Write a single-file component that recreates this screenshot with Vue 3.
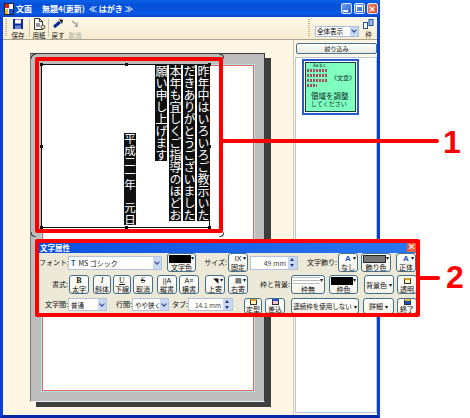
<script setup>
const columns = [
  { text: '昨年中はいろいろご教示いた', cls: '' },
  { text: 'だきありがとうございました', cls: '' },
  { text: '本年も宜しくご指導のほどお', cls: '' },
  { text: '願い申し上げます', cls: '' },
  { text: '平成二一年　元日', cls: 'date' }
]
const handles = ['tl', 'tc', 'tr', 'ml', 'mr', 'bl', 'bc', 'br']
const corners = ['c-tl', 'c-tr', 'c-bl', 'c-br']
</script>

<template>
  <div class="stage">
    <div class="window">
      <header class="titlebar">
        <svg class="app-icon" width="10" height="12" viewBox="0 0 10 12">
          <rect x="0.5" y="0.5" width="9" height="11" fill="#fff" stroke="#222" />
          <rect x="1" y="1" width="4" height="4" fill="#e02020" />
          <rect x="5" y="6" width="4" height="5" fill="#2050d0" />
          <rect x="1" y="6" width="3" height="5" fill="#f0c020" />
        </svg>
        <span class="t1">文面</span>
        <span class="t2">無題4(更新)</span>
        <span class="t3">≪ はがき ≫</span>
        <div class="caps">
          <span class="cap"><i class="min"></i></span>
          <span class="cap"><i class="max"></i></span>
          <span class="cap close">✕</span>
        </div>
      </header>

      <div class="toolbar">
        <span class="grip"></span>
        <div class="tool tool-first">
          <svg width="12" height="12" viewBox="0 0 12 12">
            <rect x="1" y="1" width="10" height="10" fill="#0a2a9a" />
            <rect x="3" y="1.500" width="6" height="4" fill="#fff" />
            <rect x="3" y="7.500" width="6" height="3.500" fill="#6a86d0" />
          </svg>
          <span>保存</span>
        </div>
        <span class="sep"></span>
        <div class="tool">
          <svg width="14" height="12" viewBox="0 0 14 12">
            <path d="M2.500.5h5l3 3v8h-8z" fill="#fff" stroke="#333" />
            <path d="M7.500.5v3h3M4 6h4M4 8h4" fill="none" stroke="#333" />
            <circle cx="11" cy="9" r="2" fill="#e8e0b0" stroke="#555" />
          </svg>
          <span>用紙</span>
        </div>
        <span class="sep"></span>
        <div class="tool">
          <svg width="12" height="12" viewBox="0 0 12 12">
            <path d="M2 9 8 4" stroke="#0a2a9a" stroke-width="3" />
            <path d="M7 1l4 1-1 4z" fill="#111" />
          </svg>
          <span>戻す</span>
        </div>
        <div class="tool disabled">
          <svg width="12" height="12" viewBox="0 0 12 12">
            <path d="M3 3l5 4" stroke="#999" stroke-width="1.500" />
            <path d="M9 4v5H5z" fill="#aaa" />
          </svg>
          <span>取消</span>
        </div>
        <span class="toolbar-space"></span>
        <span class="grip"></span>
        <div class="view-select"><span>全体表示</span><b class="arrow"></b></div>
        <div class="tool frame-tool">
          <svg width="11" height="10" viewBox="0 0 11 10">
            <rect x="0.500" y="3.500" width="4" height="6" fill="#fff" stroke="#2050a0" />
            <rect x="6" y="0.500" width="4" height="6" fill="#9cc0ee" stroke="#2050a0" />
          </svg>
          <span>枠</span>
        </div>
      </div>

      <main class="body">
        <section class="canvas">
          <div class="page">
            <div class="paper"></div>
          </div>
        </section>
        <aside class="side">
          <div class="filter">絞り込み</div>
          <div class="list">
            <div class="thumb">
              <div class="thumb-inner">
                <div class="thumb-abc">Aa b c</div>
                <div class="thumb-mid">
                  <div class="thumb-dots"><i></i><i></i><i></i><i class="short"></i></div>
                  <span>《文章》</span>
                </div>
                <div class="thumb-note">領域を調整</div>
                <div class="thumb-sub">してください</div>
              </div>
            </div>
          </div>
        </aside>
      </main>
    </div>

    <div class="selection">
      <span v-for="h in handles" :key="h" class="handle" :class="h"></span>
      <div class="vtext">
        <div v-for="c in columns" :key="c.text" class="vcol" :class="c.cls">{{ c.text }}</div>
      </div>
    </div>

    <div class="panel">
      <div class="panel-title"><span>文字属性</span><b>×</b></div>
      <div class="row row1">
        <span class="lbl w29">フォント:</span>
        <div class="combo w94 ml0">
          <span class="combo-text"><em class="tt">T</em>MS ゴシック</span><b class="arrow"></b>
        </div>
        <div class="btn color w29 ml5"><i class="swatch black"></i><span>文字色</span><u>▾</u></div>
        <span class="lbl w31">サイズ:</span>
        <div class="btn w20 ml1"><span class="ico small">IX</span><span>固定</span><u>▾</u></div>
        <div class="spin w48 ml2"><span>49 mm</span><div class="updown"><b></b><b class="dn"></b></div></div>
        <span class="lbl w39">文字飾り:</span>
        <div class="btn w20 ml1"><span class="ico blue">A</span><span>なし</span><u>▾</u></div>
        <div class="btn color w30 ml3"><i class="swatch gray"></i><span>飾り色</span><u>▾</u></div>
        <div class="btn w20 ml5"><span class="ico blue">A</span><span>正体</span><u>▾</u></div>
      </div>
      <div class="row row2">
        <span class="lbl w29">書式:</span>
        <div class="btn w20 ml1"><span class="ico"><strong>B</strong></span><span>太字</span></div>
        <div class="btn w18 ml4"><span class="ico"><em>I</em></span><span>斜体</span></div>
        <div class="btn w18 ml2"><span class="ico"><ins>U</ins></span><span>下線</span></div>
        <div class="btn w20 ml2"><span class="ico"><del>S</del></span><span>取消</span></div>
        <div class="btn w20 ml4"><span class="ico small">||A</span><span>縦書</span></div>
        <div class="btn w20 ml2"><span class="ico small">A≡</span><span>横書</span></div>
        <div class="btn w20 ml6"><span class="ico small">◥</span><span>上寄</span><u>▾</u></div>
        <div class="btn w20 ml3"><span class="ico small">▤</span><span>右寄</span><u>▾</u></div>
        <span class="lbl w42">枠と背景:</span>
        <div class="btn w34 ml1"><i class="swatch dotted"></i><span>枠無</span><u>▾</u></div>
        <div class="btn color w29 ml4"><i class="swatch black"></i><span>枠色</span><u>▾</u></div>
        <div class="btn wide w30 ml6"><span>背景色</span><u>▾</u></div>
        <div class="btn w20 ml3"><i class="doc"></i><span>透明</span></div>
      </div>
      <div class="row row3">
        <span class="lbl w29">文字間:</span>
        <div class="combo sm w39 ml0"><span class="combo-text">普通</span><b class="arrow"></b></div>
        <span class="lbl w20 ml5">行間:</span>
        <div class="combo sm w37 ml0"><span class="combo-text">やや狭く</span><b class="arrow"></b></div>
        <span class="lbl w19">タブ:</span>
        <div class="spin sm w45"><span>14.1 mm</span><div class="updown"><b></b><b class="dn"></b></div></div>
        <div class="btn w18 ml11"><i class="doc"></i><span>定型</span></div>
        <div class="btn w20 ml3"><i class="doc pink"></i><span>差込</span></div>
        <div class="btn wide w68 ml6 tiny"><span>連続枠を使用しない</span><u>▾</u></div>
        <div class="btn wide w31 ml4"><span>詳細</span><u>▾</u></div>
        <div class="btn w20 ml3"><i class="doc exit"></i><span>終了</span></div>
      </div>
    </div>

    <div class="mark mark-one"></div>
    <div class="mark mark-two"></div>
    <span v-for="c in corners" :key="c" class="corner" :class="c"></span>
    <div class="leader leader-one"></div>
    <div class="leader leader-two"></div>
    <span class="callout callout-one">1</span>
    <span class="callout callout-two">2</span>
  </div>
</template>

<style>
html, body { margin: 0; background: #fff; }
</style>

<style scoped>
.stage {
  position: relative;
  width: 470px;
  height: 418px;
  overflow: hidden;
  background: #fff;
  font-family: "Noto Sans CJK JP", "Liberation Sans", sans-serif;
}
.window {
  width: 380px;
  height: 418px;
  box-sizing: border-box;
  display: flex;
  flex-direction: column;
  border-left: 3px solid #0a3fd8;
  border-right: 3px solid #0a3fd8;
  border-bottom: 3px solid #0626a8;
  background: #fff6e6;
}
.titlebar {
  margin: 0 -3px;
  height: 17px;
  flex: none;
  display: flex;
  align-items: center;
  padding-left: 4px;
  background: linear-gradient(#0a62e8, #0550d8 30%, #0a58e6 80%, #0744c8);
  color: #fff;
  font-size: 8px;
  font-weight: 700;
  white-space: nowrap;
}
.app-icon { flex: none; }
.t1 { margin-left: 2px; width: 26px; }
.t2 { width: 47px; }
.t3 { flex: 1; }
.caps { display: flex; gap: 2px; margin-right: 2px; }
.cap {
  width: 11px;
  height: 11px;
  border: 1px solid #dfe8fb;
  border-radius: 2px;
  box-sizing: border-box;
  background: linear-gradient(135deg, #6f9cf0, #2a5fd8);
  position: relative;
  display: block;
}
.cap .min { position: absolute; left: 1px; bottom: 1px; width: 5px; height: 2px; background: #fff; }
.cap .max { position: absolute; left: 1px; top: 1px; width: 7px; height: 7px; box-sizing: border-box; border: 1px solid #fff; border-top-width: 2px; }
.cap.close { background: linear-gradient(135deg, #f0907a, #d83a18); color: #fff; font-size: 8px; line-height: 9px; text-align: center; font-weight: 700; }

.toolbar {
  height: 23px;
  flex: none;
  display: flex;
  align-items: center;
  box-sizing: border-box;
  background: linear-gradient(#fdf8e8, #f7ecd0);
  border-bottom: 1px solid #a8a490;
}
.grip {
  width: 2px;
  height: 18px;
  margin-left: 2px;
  background: repeating-linear-gradient(#d8b080 0 1px, transparent 1px 2px);
  flex: none;
}
.tool {
  display: flex;
  flex-direction: column;
  align-items: center;
  width: 14px;
  font-size: 6.500px;
  line-height: 8px;
  color: #111;
  flex: none;
}
.tool svg { display: block; margin-bottom: 1px; }
.tool-first { margin-left: 4px; margin-right: 2px; }
.tool.disabled { color: #a8a8a0; margin-left: 3px; }
.sep { width: 1px; height: 18px; background: #c8c4b0; margin: 0 2px; flex: none; }
.toolbar-space { flex: 1; }
.view-select {
  margin-left: 5px;
  margin-top: 6px;
  width: 44px;
  height: 11px;
  box-sizing: border-box;
  border: 1px solid #a8c0dc;
  background: #fff;
  display: flex;
  align-items: center;
  justify-content: space-between;
  font-size: 6.500px;
  line-height: 9px;
  padding-left: 1px;
  white-space: nowrap;
  overflow: hidden;
}
.frame-tool { margin-left: 3px; width: 13px; margin-right: 2px; }

.arrow {
  flex: none;
  position: relative;
  display: block;
  width: 8px;
  height: 100%;
  background: #c8d8f4;
}
.arrow::after {
  content: "";
  position: absolute;
  left: 1.500px;
  top: 50%;
  margin-top: -3px;
  width: 3px;
  height: 3px;
  border-right: 1.500px solid #2a3c80;
  border-bottom: 1.500px solid #2a3c80;
  transform: rotate(45deg);
}

.body { flex: 1; display: flex; min-height: 0; }
.canvas { width: 290px; flex: none; padding: 13px 0 0 27px; box-sizing: border-box; }
.page {
  width: 235px;
  height: 349px;
  box-sizing: border-box;
  background: #bdbdbd;
  border: 1px solid;
  border-color: #3a3a3a #3a3a3a #f0f0f0 #777;
  box-shadow: 6px 5px 0 #3e3e3e;
  padding: 11px 11px 0 11px;
}
.paper {
  height: 326px;
  box-sizing: border-box;
  width: 212px;
  background: #fff;
  border: 1px solid #f46060;
  outline: 1px solid #a8e8e8;
}
.side {
  flex: 1;
  display: flex;
  flex-direction: column;
  border-left: 1px solid #cfc9a8;
  background: #fff6e6;
  padding: 3px 0 0 1px;
  box-sizing: border-box;
}
.filter {
  margin-left: 1px;
  width: 81px;
  height: 11px;
  box-sizing: border-box;
  border: 1px solid #4a7090;
  border-radius: 2px;
  background: linear-gradient(#fff, #e8e8e0);
  font-size: 6px;
  line-height: 9px;
  text-align: center;
  color: #111;
}
.list {
  margin-top: 3px;
  flex: 1;
  box-sizing: border-box;
  background: #fff;
  border: 1px solid #b8c8dc;
  padding: 1px 0 0 6px;
  margin-bottom: 2px;
}
.thumb {
  width: 57px;
  height: 56px;
  box-sizing: border-box;
  border: 2px solid #2a5ad0;
  padding: 1px;
  background: #fff;
}
.thumb-inner {
  height: 100%;
  box-sizing: border-box;
  border: 1px solid #14403a;
  background: #80ffc0;
  padding: 0 1px;
  color: #0a2a28;
  overflow: hidden;
  white-space: nowrap;
}
.thumb-abc { font-size: 4.500px; line-height: 5px; height: 5px; padding-left: 6px; }
.thumb-mid { display: flex; align-items: center; justify-content: space-between; height: 20px; }
.thumb-mid span { font-size: 6px; line-height: 8px; margin-right: -1px; }
.thumb-dots { width: 21px; display: flex; flex-direction: column; gap: 2px; }
.thumb-dots i { display: block; height: 3px; background: repeating-linear-gradient(90deg, #a05060 0 2px, transparent 2px 3px); }
.thumb-dots i.short { width: 10px; }
.thumb-note { padding-left: 4px; margin-top: 4px; font-size: 7.500px; line-height: 8px; height: 8px; }
.thumb-sub { padding-left: 4px; font-size: 6px; line-height: 7px; height: 7px; }

.selection {
  position: absolute;
  left: 41px;
  top: 64px;
  width: 169px;
  height: 164px;
  box-sizing: border-box;
  border: 1px solid #111;
  background: #fff;
}
.handle { position: absolute; width: 3px; height: 3px; background: #111; }
.handle.tl { left: -2px; top: -2px; }
.handle.tc { left: 83px; top: -2px; }
.handle.tr { right: -2px; top: -2px; }
.handle.ml { left: -2px; top: 80px; }
.handle.mr { right: -2px; top: 80px; }
.handle.bl { left: -2px; bottom: -2px; }
.handle.bc { left: 83px; bottom: -2px; }
.handle.br { right: -2px; bottom: -2px; }
.vtext {
  display: flex;
  flex-direction: row-reverse;
  align-items: flex-start;
  gap: 2px;
}
.vcol {
  writing-mode: vertical-rl;
  width: 12px;
  background: #111;
  color: #fff;
  font-size: 12px;
  line-height: 12px;
  white-space: nowrap;
  flex: none;
}
.vcol.date {
  margin-right: 17px;
  margin-top: 68px;
  font-size: 11.500px;
}

.panel {
  position: absolute;
  left: 39px;
  top: 243px;
  width: 377px;
  height: 70px;
  background: #ece9d8;
  font-size: 7px;
  color: #111;
}
.panel-title {
  height: 10px;
  background: linear-gradient(90deg, #0a50e0, #2a78f0);
  color: #fff;
  font-size: 7.500px;
  line-height: 10px;
  font-weight: 700;
  display: flex;
  justify-content: space-between;
  padding-left: 1px;
}
.panel-title b {
  width: 9px;
  height: 9px;
  line-height: 8px;
  text-align: center;
  background: #e8603c;
  border-radius: 1px;
  font-size: 8px;
}
.row { display: flex; align-items: flex-start; white-space: nowrap; }
.row1 { height: 21px; }
.row2 { height: 22px; padding-top: 1px; }
.row3 { margin-top: 1px; height: 16px; }
.lbl { display: block; text-align: right; font-size: 7px; line-height: 18px; flex: none; }
.row3 .lbl { line-height: 13px; }
.combo, .spin {
  height: 14px;
  margin-top: 3px;
  box-sizing: border-box;
  border: 1px solid #b0c4dc;
  background: #fff;
  display: flex;
  align-items: stretch;
  justify-content: space-between;
  flex: none;
  font-size: 7px;
  line-height: 12px;
  overflow: hidden;
}
.combo.sm, .spin.sm { margin-top: 0; height: 13px; font-size: 6.500px; }
.combo-text { padding-left: 2px; overflow: hidden; }
.tt { font-style: normal; color: #1a6a8a; font-weight: 700; margin-right: 3px; }
.spin > span { flex: 1; text-align: right; padding-right: 2px; color: #444; }
.updown { width: 9px; flex: none; display: flex; flex-direction: column; background: #c8d8f4; }
.updown b { flex: 1; position: relative; }
.updown b::after {
  content: "";
  position: absolute;
  left: 2px;
  top: 1px;
  border-left: 2px solid transparent;
  border-right: 2px solid transparent;
  border-bottom: 3px solid #2a3c80;
}
.updown b.dn::after { border-bottom: 0; border-top: 3px solid #2a3c80; }
.btn {
  position: relative;
  height: 19px;
  box-sizing: border-box;
  border: 1px solid #44708c;
  border-radius: 3px;
  background: linear-gradient(#fff, #f4f2e8);
  display: flex;
  flex-direction: column;
  align-items: center;
  justify-content: flex-end;
  flex: none;
  font-size: 7px;
  line-height: 8px;
  overflow: hidden;
}
.row3 .btn { height: 16px; line-height: 7px; }
.btn > u { position: absolute; right: 1px; top: 0; font-size: 6px; line-height: 7px; text-decoration: none; }
.btn.wide { flex-direction: row; justify-content: center; align-items: center; gap: 2px; }
.btn.wide > u { position: static; }
.btn.tiny { font-size: 6.500px; }
.ico { display: block; height: 8px; font-size: 8px; line-height: 8px; font-family: "Liberation Serif", serif; color: #111; }
.ico.small { font-size: 7px; font-family: "Liberation Sans", sans-serif; }
.ico.blue { color: #1a50c0; font-family: "Liberation Sans", sans-serif; font-weight: 700; }
.doc {
  display: block;
  width: 7px;
  height: 6px;
  margin-bottom: 1px;
  box-sizing: border-box;
  border: 1px solid #333;
  border-top: 2px solid #e0a020;
  background: #fff3b0;
  flex: none;
}
.doc.pink { background: #f8c0d0; border-top-color: #2050c0; }
.doc.exit { background: #2050c0; border-top-color: #e0c040; }
.swatch { display: block; align-self: stretch; margin: 1px 4px 0 1px; height: 8px; flex: none; }
.swatch.black { background: #000; }
.swatch.gray { background: #777; border: 1px solid #222; box-sizing: border-box; }
.swatch.dotted { background: repeating-linear-gradient(#bbb 0 1px, #fff 1px 3px); }

.w18 { width: 18px; } .w19 { width: 19px; } .w20 { width: 20px; }
.w29 { width: 29px; } .w30 { width: 30px; } .w31 { width: 31px; }
.w34 { width: 34px; } .w37 { width: 37px; } .w39 { width: 39px; }
.w42 { width: 42px; } .w45 { width: 45px; } .w48 { width: 48px; }
.w68 { width: 68px; } .w94 { width: 94px; }
.ml0 { margin-left: 0; } .ml1 { margin-left: 1px; } .ml2 { margin-left: 2px; }
.ml3 { margin-left: 3px; } .ml4 { margin-left: 4px; } .ml5 { margin-left: 5px; }
.ml6 { margin-left: 6px; } .ml11 { margin-left: 11px; }

.mark { position: absolute; box-sizing: border-box; border: 4px solid #f00; }
.mark-one { left: 35px; top: 57px; width: 188px; height: 176px; border-radius: 2px; }
.mark-two { left: 35px; top: 239px; width: 385px; height: 78px; border-radius: 2px; }
.corner { position: absolute; width: 5px; height: 5px; box-sizing: border-box; border: 1px solid transparent; }
.c-tl { left: 31px; top: 54px; border-top-color: #333; border-left-color: #333; border-top-left-radius: 4px; }
.c-tr { left: 219px; top: 54px; border-top-color: #333; border-right-color: #333; border-top-right-radius: 4px; }
.c-bl { left: 31px; top: 232px; border-bottom-color: #333; border-left-color: #333; border-bottom-left-radius: 4px; }
.c-br { left: 219px; top: 232px; border-bottom-color: #333; border-right-color: #333; border-bottom-right-radius: 4px; }
.leader { position: absolute; height: 4px; background: #f00; border-radius: 0 2px 2px 0; }
.leader-one { left: 223px; top: 139px; width: 216px; }
.leader-two { left: 420px; top: 276px; width: 20px; }
.callout {
  position: absolute;
  color: #f00;
  font-family: "Liberation Sans", sans-serif;
  font-weight: 700;
  font-size: 32px;
  line-height: 32px;
}
.callout-one { left: 443px; top: 126px; }
.callout-two { left: 446px; top: 261px; }
</style>
